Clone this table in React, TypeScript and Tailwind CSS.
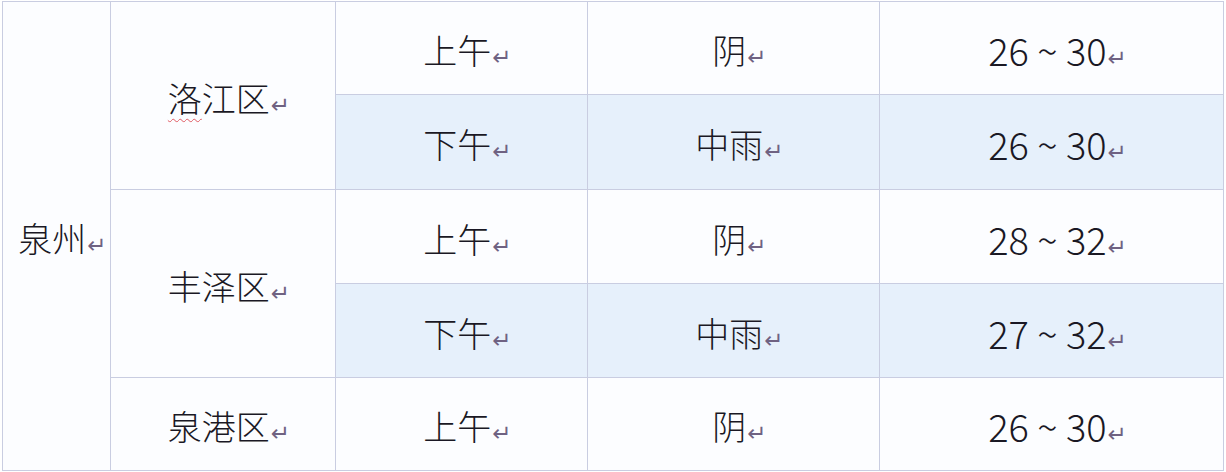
import React from "react";

const cjk = "font-['Noto_Sans_CJK_SC','Noto_Sans',sans-serif]";

function Mark() {
  return (
    <span className="ml-[1px] inline-block align-middle font-['DejaVu_Sans',sans-serif] font-normal text-[23px] leading-none text-[#6f6282] translate-y-[3px]">
      ↵
    </span>
  );
}

function Cell({
  children,
  className = "",
  num = false,
}: {
  children: React.ReactNode;
  className?: string;
  num?: boolean;
}) {
  return (
    <div
      className={`flex items-center justify-center text-[#1a1824] font-light ${cjk} ${
        num ? "text-[38px]" : "text-[34px]"
      } leading-none ${className}`}
    >
      <span className="translate-y-[2px] translate-x-[6px] whitespace-nowrap">
        {children}
        <Mark />
      </span>
    </div>
  );
}

const W = "bg-[#fcfdff]";
const B = "bg-[#e6f0fb]";

export default function App() {
  return (
    <div className="w-[1226px] h-[472px] bg-white pt-[1px] pl-[2px]">
      <div className="grid w-fit grid-cols-[107px_224px_251px_291px_343px] grid-rows-[92px_94px_93px_93px_92px] gap-px bg-[#c9cde1] p-px">
        <Cell className={`${W} row-span-5`}>泉州</Cell>
        <Cell className={`${W} row-span-2`}>
          <span className="underline decoration-wavy decoration-[#e05a62] decoration-1 underline-offset-[6px]">
            洛
          </span>
          江区
        </Cell>
        <Cell className={W}>上午</Cell>
        <Cell className={W}>阴</Cell>
        <Cell className={W} num>
          26 ~ 30
        </Cell>
        <Cell className={B}>下午</Cell>
        <Cell className={B}>中雨</Cell>
        <Cell className={B} num>
          26 ~ 30
        </Cell>
        <Cell className={`${W} row-span-2`}>丰泽区</Cell>
        <Cell className={W}>上午</Cell>
        <Cell className={W}>阴</Cell>
        <Cell className={W} num>
          28 ~ 32
        </Cell>
        <Cell className={B}>下午</Cell>
        <Cell className={B}>中雨</Cell>
        <Cell className={B} num>
          27 ~ 32
        </Cell>
        <Cell className={W}>泉港区</Cell>
        <Cell className={W}>上午</Cell>
        <Cell className={W}>阴</Cell>
        <Cell className={W} num>
          26 ~ 30
        </Cell>
      </div>
    </div>
  );
}
